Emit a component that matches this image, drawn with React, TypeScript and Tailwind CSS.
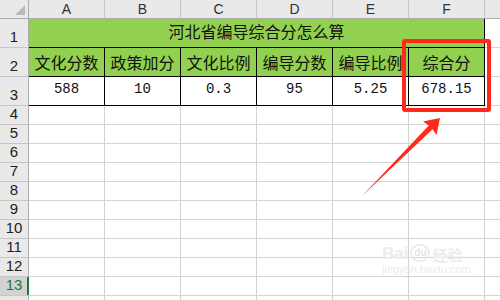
import React from "react";

// Spreadsheet screenshot: score table with a red callout
const cjk = "font-['Noto_Sans_CJK_SC',sans-serif]";
const mono = "font-['Liberation_Mono',monospace]";

const columns = ["A", "B", "C", "D", "E", "F"];
const headers = ["文化分数", "政策加分", "文化比例", "编导分数", "编导比例", "综合分"];
const values = ["588", "10", "0.3", "95", "5.25", "678.15"];
const emptyRows = [4, 5, 6, 7, 8, 9, 10, 11, 12, 13, 14];

const RowHead: React.FC<{ n: number; selected?: boolean; hideLabel?: boolean }> = ({ n, selected, hideLabel }) => (
    <div
        className={`relative flex items-end justify-center pb-[1px] border-r border-b border-r-[#ababab] border-b-[#c6c6c6] text-[15px] font-['Liberation_Sans',sans-serif] leading-none ${
            selected ? "bg-[#d2d2d2] text-[#217346]" : "bg-[#e9e9e9] text-[#222]"
        }`}
    >
        {!hideLabel && <span className="pb-[2px]">{n}</span>}
        {selected && <div className="absolute right-[-1px] top-0 bottom-0 w-[2px] bg-[#217346]" />}
    </div>
);

const App: React.FC = () => {
    return (
        <div className="relative w-[500px] h-[300px] overflow-hidden bg-white">
            <div className="grid grid-cols-[29px_repeat(6,76px)_1fr] grid-rows-[19px_29px_29px_29px_repeat(11,19px)]">
                {/* column header row */}
                <div className="relative bg-[#e9e9e9] border-r border-b border-r-[#ababab] border-b-[#ababab]">
                    <svg className="absolute left-0 top-0" width="28" height="18" viewBox="0 0 28 18">
                        <polygon points="25,5 25,15 15,15" fill="#b9b9b9" />
                    </svg>
                </div>
                {columns.map((c) => (
                    <div
                        key={c}
                        className="flex items-center justify-center bg-[#e9e9e9] border-r border-b border-r-[#c6c6c6] border-b-[#ababab] text-[14px] text-[#333] font-['Liberation_Sans',sans-serif]"
                    >
                        {c}
                    </div>
                ))}
                <div className="bg-[#e9e9e9] border-b border-b-[#ababab]" />

                {/* row 1: merged title */}
                <RowHead n={1} />
                <div className={`col-span-6 flex items-end justify-center pb-[4px] bg-[#92d050] border-r border-b border-black text-[16px] text-[#111] ${cjk}`}>
                    河北省编导综合分怎么算
                </div>
                <div className="border-b border-[#d4d4d4]" />

                {/* row 2: headers */}
                <RowHead n={2} />
                {headers.map((h) => (
                    <div
                        key={h}
                        className={`flex items-end justify-center pb-[2px] bg-[#92d050] border-r border-b border-black text-[16px] text-[#111] ${cjk}`}
                    >
                        {h}
                    </div>
                ))}
                <div className="border-b border-[#d4d4d4]" />

                {/* row 3: values */}
                <RowHead n={3} />
                {values.map((v) => (
                    <div
                        key={v}
                        className={`flex items-end justify-center pb-[5px] bg-white border-r border-b border-black text-[14px] text-[#111] ${mono}`}
                    >
                        {v}
                    </div>
                ))}
                <div className="border-b border-[#d4d4d4]" />

                {/* empty rows */}
                {emptyRows.map((r) => (
                    <React.Fragment key={r}>
                        <RowHead n={r} selected={r === 13} hideLabel={r === 14} />
                        {columns.map((c) => (
                            <div key={c} className="border-r border-b border-[#d4d4d4]" />
                        ))}
                        <div className="border-b border-[#d4d4d4]" />
                    </React.Fragment>
                ))}
            </div>

            {/* red callout box */}
            <div className="absolute left-[402px] top-[39px] w-[89px] h-[73px] border-[4px] border-[#ff2a1c] rounded-[3px]" />

            {/* arrow */}
            <svg className="absolute left-0 top-0 pointer-events-none" width="500" height="300" viewBox="0 0 500 300">
                <polygon
                    points="362,196 428.8,125.4 423,121.5 440,118 436.5,135 432.6,129.2 362,196"
                    fill="#ff2a1c"
                />
            </svg>

            {/* faint watermark */}
            <div className="absolute left-[382px] top-[244px] flex flex-col items-start pointer-events-none select-none">
                <div className="flex items-end gap-[2px]">
                    <span className="text-[17px] font-bold leading-none text-[#ececec] font-['Liberation_Sans',sans-serif]">Bai</span>
                    <span className="relative flex items-center justify-center w-[20px] h-[18px] rounded-full border-2 border-[#ececec] text-[10px] font-bold leading-none text-[#e4e4e4] font-['Liberation_Sans',sans-serif]">
                        du
                    </span>
                    <span className={`text-[15px] font-bold leading-none text-[#ececec] ${cjk}`}>经验</span>
                </div>
                <span className="mt-[2px] text-[11px] leading-none text-[#ececec] font-['Liberation_Sans',sans-serif]">
                    jingyan.baidu.com
                </span>
            </div>
        </div>
    );
};

export default App;
